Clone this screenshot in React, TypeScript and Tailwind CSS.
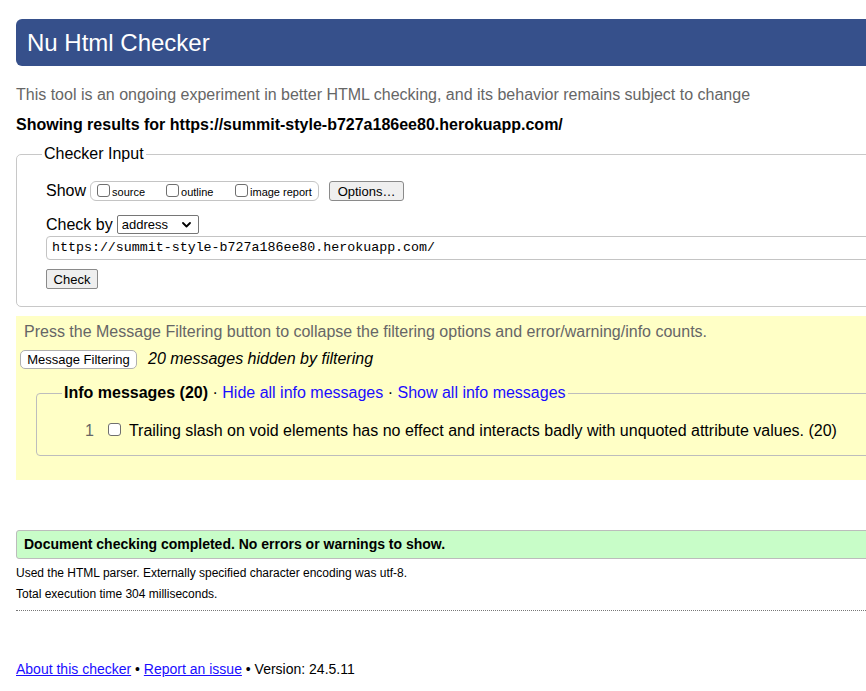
import React from "react";

function Box({ className = "" }: { className?: string }) {
  return (
    <span
      className={
        "inline-block w-[13px] h-[13px] shrink-0 rounded-[3px] border border-[#6f6f6f] bg-white " +
        className
      }
    />
  );
}

export default function App() {
  return (
    <div className="w-full min-h-[691px] overflow-hidden bg-white font-['Liberation_Sans',Arial,Helvetica,sans-serif] text-black">
      <div className="w-[920px] pl-[16px] pt-[19px] pb-[10px]">
        {/* Header */}
        <div className="h-[47px] rounded-l-[6px] bg-[#36508b] flex items-center pl-[11px]">
          <h1 className="text-[24px] leading-[28px] text-white font-normal">Nu Html Checker</h1>
        </div>

        <p className="mt-[20px] text-[16px] leading-[18px] text-[#666]">
          This tool is an ongoing experiment in better HTML checking, and its behavior remains subject to change
        </p>
        <p className="mt-[12px] text-[16px] leading-[18px] font-bold">
          Showing results for https://summit-style-b727a186ee80.herokuapp.com/
        </p>

        {/* Checker Input */}
        <fieldset className="mt-[11px] border border-[#c8c8c8] rounded-l-[5px] pl-[29px] pr-0 pt-0 pb-[17px]">
          <legend className="ml-[-4px] px-[2px] text-[16px] leading-[18px]">Checker Input</legend>
          <div className="mt-[18px] h-[20px] flex items-center">
            <span className="text-[16px] leading-[18px]">Show</span>
            <div className="ml-[4px] w-[229px] h-[20px] flex items-center rounded-[6px] border border-[#c4c4c4] pl-[6px]">
              <Box className="mt-[-2px]" />
              <span className="ml-[2px] mt-[3px] w-[54px] text-[11px] leading-[13px]">source</span>
              <Box className="mt-[-2px]" />
              <span className="ml-[2px] mt-[3px] w-[54px] text-[11px] leading-[13px]">outline</span>
              <Box className="mt-[-2px]" />
              <span className="ml-[2px] mt-[3px] text-[11px] leading-[13px]">image report</span>
            </div>
            <button className="ml-[10px] w-[75px] h-[20px] rounded-[3px] border border-[#8a8a8a] bg-[#efefef] text-[13px] leading-[15px] flex items-center justify-center">
              Options…
            </button>
          </div>
          <div className="mt-[14px] h-[19px] flex items-center">
            <span className="text-[16px] leading-[18px]">Check by</span>
            <div className="ml-[4px] w-[82px] h-[19px] border border-[#767676] rounded-[2px] bg-white flex items-center pl-[4px] pr-[6px] justify-between">
              <span className="text-[13px] leading-[15px]">address</span>
              <svg width="9" height="6" viewBox="0 0 9 6" className="mr-[1px]">
                <path d="M1 1 L4.5 4.5 L8 1" fill="none" stroke="#000" strokeWidth="1.8" strokeLinecap="round" strokeLinejoin="round" />
              </svg>
            </div>
          </div>
          <div className="mt-[2px] h-[24px] border border-[#c4c4c4] rounded-l-[4px] flex items-center pl-[5px]">
            <span className="font-['Liberation_Mono','DejaVu_Sans_Mono',monospace] text-[13.3px] leading-[16px]">
              https://summit-style-b727a186ee80.herokuapp.com/
            </span>
          </div>
          <button className="mt-[9px] w-[52px] h-[20px] rounded-[2px] border border-[#8a8a8a] bg-[#efefef] text-[13px] leading-[15px] flex items-center justify-center">
            Check
          </button>
        </fieldset>

        {/* Filters */}
        <div className="mt-[9px] bg-[#ffffc6] pl-[8px] pt-[7px] pb-[24px]">
          <p className="text-[16px] leading-[18px] text-[#666]">
            Press the Message Filtering button to collapse the filtering options and error/warning/info counts.
          </p>
          <div className="mt-[9px] h-[18px] flex items-center ml-[-4px]">
            <button className="w-[117px] h-[19px] rounded-[5px] border border-[#b0b0b0] bg-white text-[13px] leading-[15px] flex items-center justify-center">
              Message Filtering
            </button>
            <span className="ml-[11px] italic text-[16px] leading-[18px]">20 messages hidden by filtering</span>
          </div>
          <fieldset className="mt-[16px] ml-[12px] border border-[#bdbdbd] rounded-l-[4px] pl-[28px] pr-0 pt-0 pb-[15px]">
            <legend className="ml-[-3px] px-[2px] text-[16px] leading-[18px]">
              <span className="font-bold">Info messages (20)</span>
              <span> · </span>
              <a className="text-[#1a0dff] cursor-pointer">Hide all info messages</a>
              <span> · </span>
              <a className="text-[#1a0dff] cursor-pointer">Show all info messages</a>
            </legend>
            <div className="mt-[20px] h-[18px] flex items-center">
              <span className="ml-[20px] text-[16px] leading-[18px] text-[#666]">1</span>
              <Box className="ml-[14px] mt-[-3px]" />
              <span className="ml-[8px] text-[16px] leading-[18px]">
                Trailing slash on void elements has no effect and interacts badly with unquoted attribute values. (20)
              </span>
            </div>
          </fieldset>
        </div>

        {/* Success */}
        <div className="mt-[50px] h-[29px] rounded-l-[3px] border border-[#bcbcbc] bg-[#c8fdc8] flex items-center pl-[7px]">
          <span className="text-[14px] leading-[17px] font-bold">
            Document checking completed. No errors or warnings to show.
          </span>
        </div>
        <p className="mt-[7px] text-[12px] leading-[15px]">
          Used the HTML parser. Externally specified character encoding was utf-8.
        </p>
        <p className="mt-[6px] text-[12px] leading-[15px]">Total execution time 304 milliseconds.</p>
        <div className="mt-[8px] border-t border-dotted border-[#777]" />

        <p className="mt-[50px] text-[14px] leading-[17px]">
          <a className="text-[#1a0dff] underline cursor-pointer">About this checker</a>
          <span> • </span>
          <a className="text-[#1a0dff] underline cursor-pointer">Report an issue</a>
          <span> • Version: 24.5.11</span>
        </p>
      </div>
    </div>
  );
}
